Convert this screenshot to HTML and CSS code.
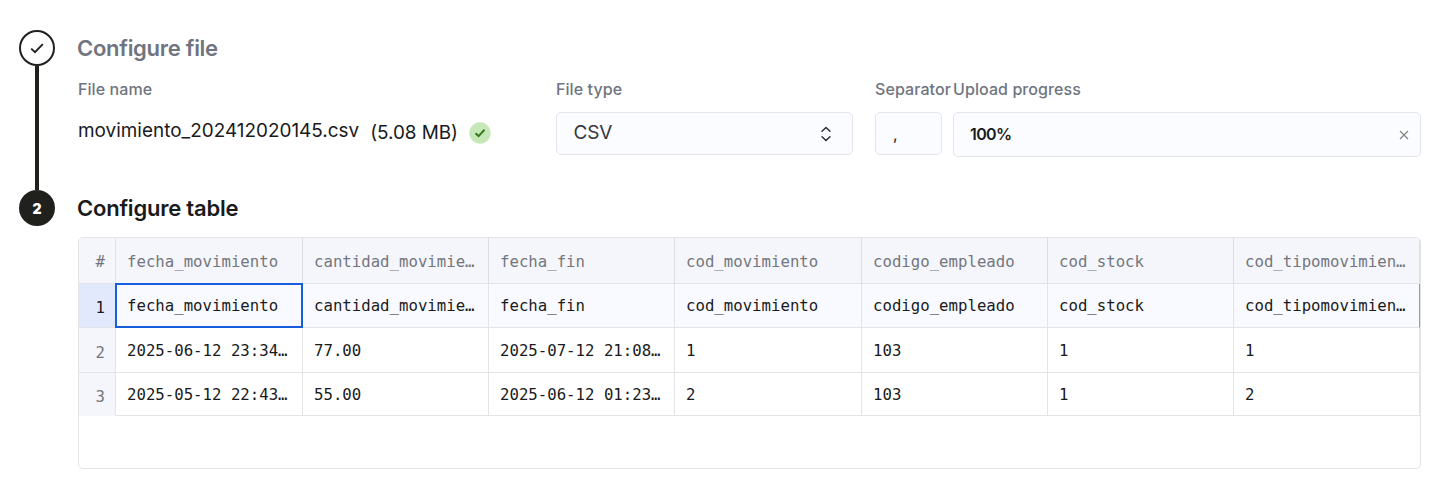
FILE: index.html
```html
<!DOCTYPE html>
<html lang="en">
<head>
<meta charset="utf-8">
<title>Configure table</title>
<link rel="stylesheet" href="styles.css">
</head>
<body>
<main class="wizard">
  <div class="stepper">
    <div class="step step-done">
      <svg width="36" height="36" viewBox="0 0 36 36" fill="none"><path d="M12.2 18.6 16 22.2 23.8 14.2" stroke="#20211d" stroke-width="1.9"/></svg>
    </div>
    <div class="step-line"></div>
    <div class="step step-current">2</div>
  </div>
  <div class="content">
    <section class="file-section">
      <h2 class="title title-muted">Configure file</h2>
      <div class="fields">
        <div class="field field-name">
          <span class="label">File name</span>
          <div class="file">
            <span class="file-name">movimiento_202412020145.csv</span>
            <span class="file-size">(5.08 MB)</span>
            <svg class="file-ok" width="22" height="22" viewBox="0 0 22 22" fill="none"><circle cx="11" cy="11" r="10.7" fill="#c6e8b8"/><path d="M6.5 11.2 9.6 14.1 15.5 7.7" stroke="#377b1c" stroke-width="2"/></svg>
          </div>
        </div>
        <div class="field field-type">
          <span class="label">File type</span>
          <div class="box select">
            <span class="select-value">CSV</span>
            <svg width="12" height="16" viewBox="0 0 12 16" fill="none" stroke="#27282b" stroke-width="1.4" stroke-linecap="round" stroke-linejoin="round"><path d="M2 5.2 6 1.4 10 5.2M2 10.8 6 14.6 10 10.8"/></svg>
          </div>
        </div>
        <div class="field field-separator">
          <span class="label">Separator</span>
          <div class="box separator">,</div>
        </div>
        <div class="field field-progress">
          <span class="label">Upload progress</span>
          <div class="box progress">
            <span>100%</span>
            <svg width="10" height="10" viewBox="0 0 10 10" stroke="#86827d" stroke-width="1.2"><path d="M1 1 9 9M9 1 1 9"/></svg>
          </div>
        </div>
      </div>
    </section>
    <section>
      <h2 class="title">Configure table</h2>
      <div class="table">
        <div class="row row-head"><div class="index">#</div><div class="cell">fecha_movimiento</div><div class="cell">cantidad_movimie…</div><div class="cell">fecha_fin</div><div class="cell">cod_movimiento</div><div class="cell">codigo_empleado</div><div class="cell">cod_stock</div><div class="cell">cod_tipomovimien…</div></div>
        <div class="row row-active"><div class="index">1</div><div class="cell cell-selected">fecha_movimiento</div><div class="cell">cantidad_movimie…</div><div class="cell">fecha_fin</div><div class="cell">cod_movimiento</div><div class="cell">codigo_empleado</div><div class="cell">cod_stock</div><div class="cell">cod_tipomovimien…</div></div>
        <div class="row row-second"><div class="index">2</div><div class="cell">2025-06-12 23:34…</div><div class="cell">77.00</div><div class="cell">2025-07-12 21:08…</div><div class="cell">1</div><div class="cell">103</div><div class="cell">1</div><div class="cell">1</div></div>
        <div class="row row-last"><div class="index">3</div><div class="cell">2025-05-12 22:43…</div><div class="cell">55.00</div><div class="cell">2025-06-12 01:23…</div><div class="cell">2</div><div class="cell">103</div><div class="cell">1</div><div class="cell">2</div></div>
      </div>
    </section>
  </div>
</main>
</body>
</html>
```
FILE: styles.css
```css
* { box-sizing: border-box; }
body {
  margin: 0;
  background: #fff;
  color: #191a1c;
  font-family: Inter, sans-serif;
}
.wizard {
  display: flex;
  gap: 22px;
  padding: 30px 24px 0 19px;
  height: 480px;
}
.stepper {
  display: flex;
  flex-direction: column;
  align-items: center;
  width: 36px;
  flex: none;
}
.step {
  display: flex;
  align-items: center;
  justify-content: center;
  width: 36px;
  height: 36px;
  border-radius: 50%;
}
.step-done { border: 2px solid #20211d; }
.step-done svg { flex: none; }
.step-line { width: 4px; height: 124px; background: #20211d; }
.step-current {
  background: #20211d;
  color: #fff;
  font-size: 14px;
  font-weight: 900;
}
.content { flex: 1; min-width: 0; }
.file-section { height: 160px; }
.title {
  margin: 0;
  font-size: 22px;
  line-height: 36px;
  font-weight: 600;
  letter-spacing: -0.22px;
  white-space: nowrap;
}
.title-muted { color: #6f7480; letter-spacing: -0.28px; }
.fields {
  display: grid;
  grid-template-columns: 478px 319px 78px 468px;
  padding: 13px 0 0 1px;
}
.field { display: flex; flex-direction: column; align-items: flex-start; gap: 13px; }
.label {
  height: 20px;
  font-size: 16px;
  line-height: 20px;
  font-weight: 500;
  letter-spacing: 0.08px;
  color: #6f7480;
  white-space: nowrap;
}
.file {
  display: flex;
  height: 42px;
  align-items: center;
  font-size: 18.9px;
  white-space: nowrap;
}
.file-name { padding-bottom: 5px; letter-spacing: 0.02px; }
.file-size { margin-left: 11px; padding-bottom: 2px; letter-spacing: -0.05px; }
.file-ok { margin-left: 11px; }
.box {
  display: flex;
  align-items: center;
  height: 43px;
  border: 1px solid #e5e6ec;
  border-radius: 5px;
  background: #fbfcff;
}
.select {
  width: 297px;
  justify-content: space-between;
  padding: 0 20px 0 16.5px;
  color: #36373b;
  font-size: 19px;
  letter-spacing: -0.1px;
}
.select-value { padding-bottom: 3px; }
.separator { width: 67px; padding-left: 17px; font-size: 16px; }
.progress {
  width: 468px;
  height: 45px;
  justify-content: space-between;
  padding: 0 11px 0 16px;
  font-size: 16px;
  font-weight: 600;
  letter-spacing: -0.6px;
}
.progress span { padding-bottom: 1px; }
.table {
  width: 1343px;
  height: 232px;
  margin: 11px 0 0 1px;
  border: 1px solid #e3e4e6;
  border-radius: 5px;
  overflow: hidden;
  font-family: "DejaVu Sans Mono", monospace;
  font-size: 15.7px;
}
.row {
  display: grid;
  grid-template-columns: 37px 187px 186px 186px 187px 186px 186px 186px;
  height: 45px;
}
.cell, .index {
  display: flex;
  align-items: center;
  border-right: 1px solid #e3e4e7;
  border-bottom: 1px solid #e3e4e7;
  white-space: nowrap;
}
.cell { padding-left: 11px; }
.index {
  justify-content: flex-end;
  padding: 4px 10px 0 0;
  background: #f5f6fb;
  color: #73767e;
}
.row-head { height: 46px; background: #f5f6fb; color: #73767e; }
.row-head .cell, .row-head .index { padding-top: 2px; }
.row-head .cell { border-right-color: #dcdee3; }
.row-active { height: 44px; background: #f9faff; }
.row-active .index { background: #e3e9fd; color: #191a1c; }
.row-active .cell:last-child { border-right-color: #8d9cba; }
.row-active .cell-selected {
  margin: -1px 0 0 -1px;
  padding: 0 0 0 10px;
  border: 2px solid #175ddc;
}
.row-last { height: 43px; }
.row-last .index { border-bottom-color: #f5f6fb; }
```
